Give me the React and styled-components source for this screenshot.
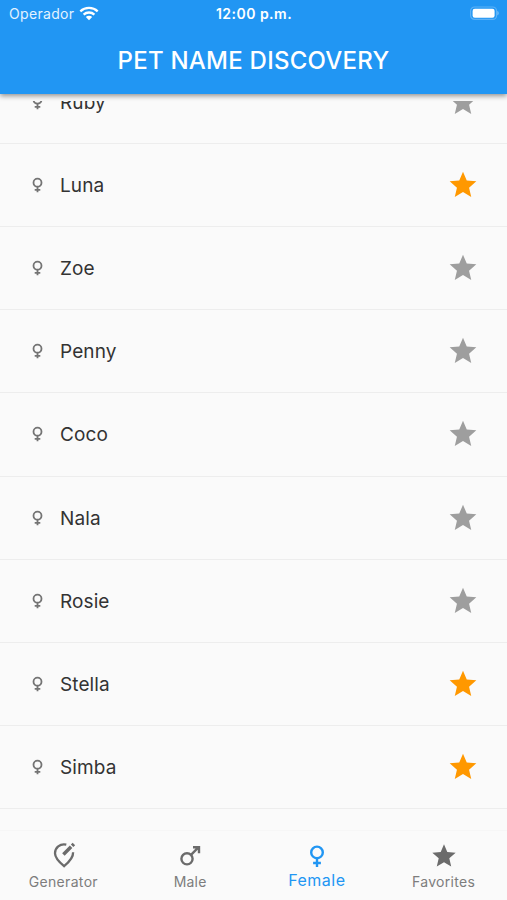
import React from "react";
import styled, { createGlobalStyle } from "styled-components";

const GlobalStyle = createGlobalStyle`
  * { box-sizing: border-box; }
  body {
    margin: 0;
    background: #fafafa;
    font-family: Inter, "Liberation Sans", sans-serif;
  }
`;

const Screen = styled.div`
  width: 507px;
  height: 900px;
  display: flex;
  flex-direction: column;
  overflow: hidden;
  background: #fafafa;
`;

const Header = styled.header`
  height: 94px;
  flex: none;
  background: #2196f3;
  color: #fff;
  box-shadow: 0 2px 5px rgba(0, 0, 0, 0.42);
`;

const StatusBar = styled.div`
  height: 27px;
  display: grid;
  grid-template-columns: 1fr auto 1fr;
  align-items: center;
  padding: 0 8px 0 9px;
`;

const Carrier = styled.div`
  display: flex;
  align-items: center;
  gap: 5px;
  font-size: 14px;
  letter-spacing: 0.32px;
  color: #e3f2ff;
`;

const Clock = styled.div`
  font-size: 14px;
  font-weight: 600;
  letter-spacing: 0.48px;
`;

const BatterySlot = styled.div`
  display: flex;
  justify-content: flex-end;
`;

const Title = styled.h1`
  margin: 0;
  height: 66px;
  display: flex;
  align-items: center;
  justify-content: center;
  font-size: 24px;
  font-weight: 500;
  letter-spacing: 0.24px;
`;

const List = styled.main`
  flex: 1;
  min-height: 0;
  margin-top: 7px;
  overflow: hidden;
  display: flex;
  flex-direction: column;
  justify-content: flex-end;
  padding-bottom: 21px;
`;

const Row = styled.div`
  height: 83.14px;
  flex: none;
  display: flex;
  align-items: center;
  padding: 0 28px 0 31px;
  border-bottom: 1px solid #ededed;
`;

const Name = styled.span`
  flex: 1;
  margin-left: 16px;
  padding-top: 2px;
  font-size: 19px;
  line-height: 24px;
  color: #333;
  letter-spacing: ${(p) => p.$tracking}px;
`;

const TabBar = styled.nav`
  height: 70px;
  flex: none;
  display: grid;
  grid-template-columns: repeat(4, 1fr);
  border-top: 1px solid #f6f6f6;
`;

const Tab = styled.div`
  display: flex;
  flex-direction: column;
  align-items: center;
  padding-top: 11px;
  color: ${(p) => (p.$active ? "#2196f3" : "#6b6b6b")};
`;

const TabLabel = styled.span`
  margin-top: ${(p) => (p.$active ? "0" : "2px")};
  font-size: ${(p) => (p.$active ? 16 : 14)}px;
  line-height: 20px;
  letter-spacing: ${(p) => p.$tracking}px;
  color: ${(p) => (p.$active ? "#2196f3" : "#7d7d7d")};
`;

const Svg = styled.svg`
  display: block;
  flex: none;
`;

const Star = ({ size, color = "currentColor" }) => (
  <Svg width={size} height={size} viewBox="0 0 24 24" fill={color}>
    <path d="M12 17.27 18.18 21l-1.64-7.03L22 9.24l-7.19-.61L12 2 9.19 8.63 2 9.24l5.46 4.73L5.82 21z" />
  </Svg>
);

const Venus = () => (
  <Svg width="13" height="16" viewBox="0 0 13 16" fill="none" stroke="#747474" strokeWidth="1.8">
    <circle cx="6.5" cy="5.7" r="4" />
    <path d="M6.5 9.7v5.6M3.7 12.8h5.6" />
  </Svg>
);

const FemaleIcon = () => (
  <Svg width="28" height="28" viewBox="0 0 28 28" fill="none" stroke="currentColor" strokeWidth="2.4">
    <circle cx="14" cy="10.4" r="5.8" />
    <path d="M14 16.2v8.8M10.1 21h7.8" />
  </Svg>
);

const MaleIcon = () => (
  <Svg width="28" height="28" viewBox="0 0 28 28" fill="none" stroke="currentColor" strokeWidth="2.4">
    <circle cx="11" cy="16.8" r="5.6" />
    <path d="M15 12.8 22.4 5.4M17 5.2h6v6" />
  </Svg>
);

const GeneratorIcon = () => (
  <Svg width="28" height="28" viewBox="0 0 28 28" fill="none" stroke="currentColor">
    <path strokeWidth="2.3" d="M17.3 2.7C10.9 1.3 6 5.9 6 11.3c0 4.6 3.5 8.3 9.1 12.9 5.8-4.8 9.3-8.7 9-13.9" />
    <path strokeWidth="3.5" d="m14.4 12.4 7.7-7.7M23.1 3.7l1.8-1.8" />
  </Svg>
);

const Wifi = () => (
  <Svg width="20" height="15" viewBox="0 0 20 15" fill="none" stroke="#fff" strokeWidth="2.3">
    <path d="M1.3 5.3C6.2.8 13.8.8 18.7 5.3M4.6 8.6c3.1-2.8 7.7-2.8 10.8 0" />
    <path fill="#fff" stroke="none" d="m10 14.2-3.2-3.3c1.7-1.5 4.7-1.5 6.4 0z" />
  </Svg>
);

const Battery = () => (
  <Svg width="31" height="15" viewBox="0 0 31 15">
    <rect x="2.6" y="1" width="26" height="12.4" rx="4" fill="none" stroke="#5cb1f6" strokeWidth="1.2" />
    <rect x="4.6" y="2.7" width="22" height="9" rx="2.2" fill="#fff" />
    <path d="M29.4 5.1c1.7.5 1.7 3.7 0 4.2z" fill="#7dc1f8" />
  </Svg>
);

const pets = [
  { name: "Ruby" },
  { name: "Luna", favorite: true },
  { name: "Zoe" },
  { name: "Penny" },
  { name: "Coco" },
  { name: "Nala" },
  { name: "Rosie" },
  { name: "Stella", favorite: true },
  { name: "Simba", favorite: true },
];

const tabs = [
  { label: "Generator", icon: <GeneratorIcon />, tracking: 0.32 },
  { label: "Male", icon: <MaleIcon />, tracking: 0.2 },
  { label: "Female", icon: <FemaleIcon />, tracking: 0.5, active: true },
  { label: "Favorites", icon: <Star size={28} />, tracking: 0.3 },
];

export default function App() {
  return (
    <Screen>
      <GlobalStyle />
      <Header>
        <StatusBar>
          <Carrier>
            Operador
            <Wifi />
          </Carrier>
          <Clock>12:00 p.m.</Clock>
          <BatterySlot>
            <Battery />
          </BatterySlot>
        </StatusBar>
        <Title>PET NAME DISCOVERY</Title>
      </Header>
      <List>
        {pets.map((pet) => (
          <Row key={pet.name}>
            <Venus />
            <Name $tracking={0.1}>{pet.name}</Name>
            <Star size={32} color={pet.favorite ? "#ff9800" : "#9e9e9e"} />
          </Row>
        ))}
      </List>
      <TabBar>
        {tabs.map((tab) => (
          <Tab key={tab.label} $active={tab.active}>
            {tab.icon}
            <TabLabel $active={tab.active} $tracking={tab.tracking}>
              {tab.label}
            </TabLabel>
          </Tab>
        ))}
      </TabBar>
    </Screen>
  );
}
